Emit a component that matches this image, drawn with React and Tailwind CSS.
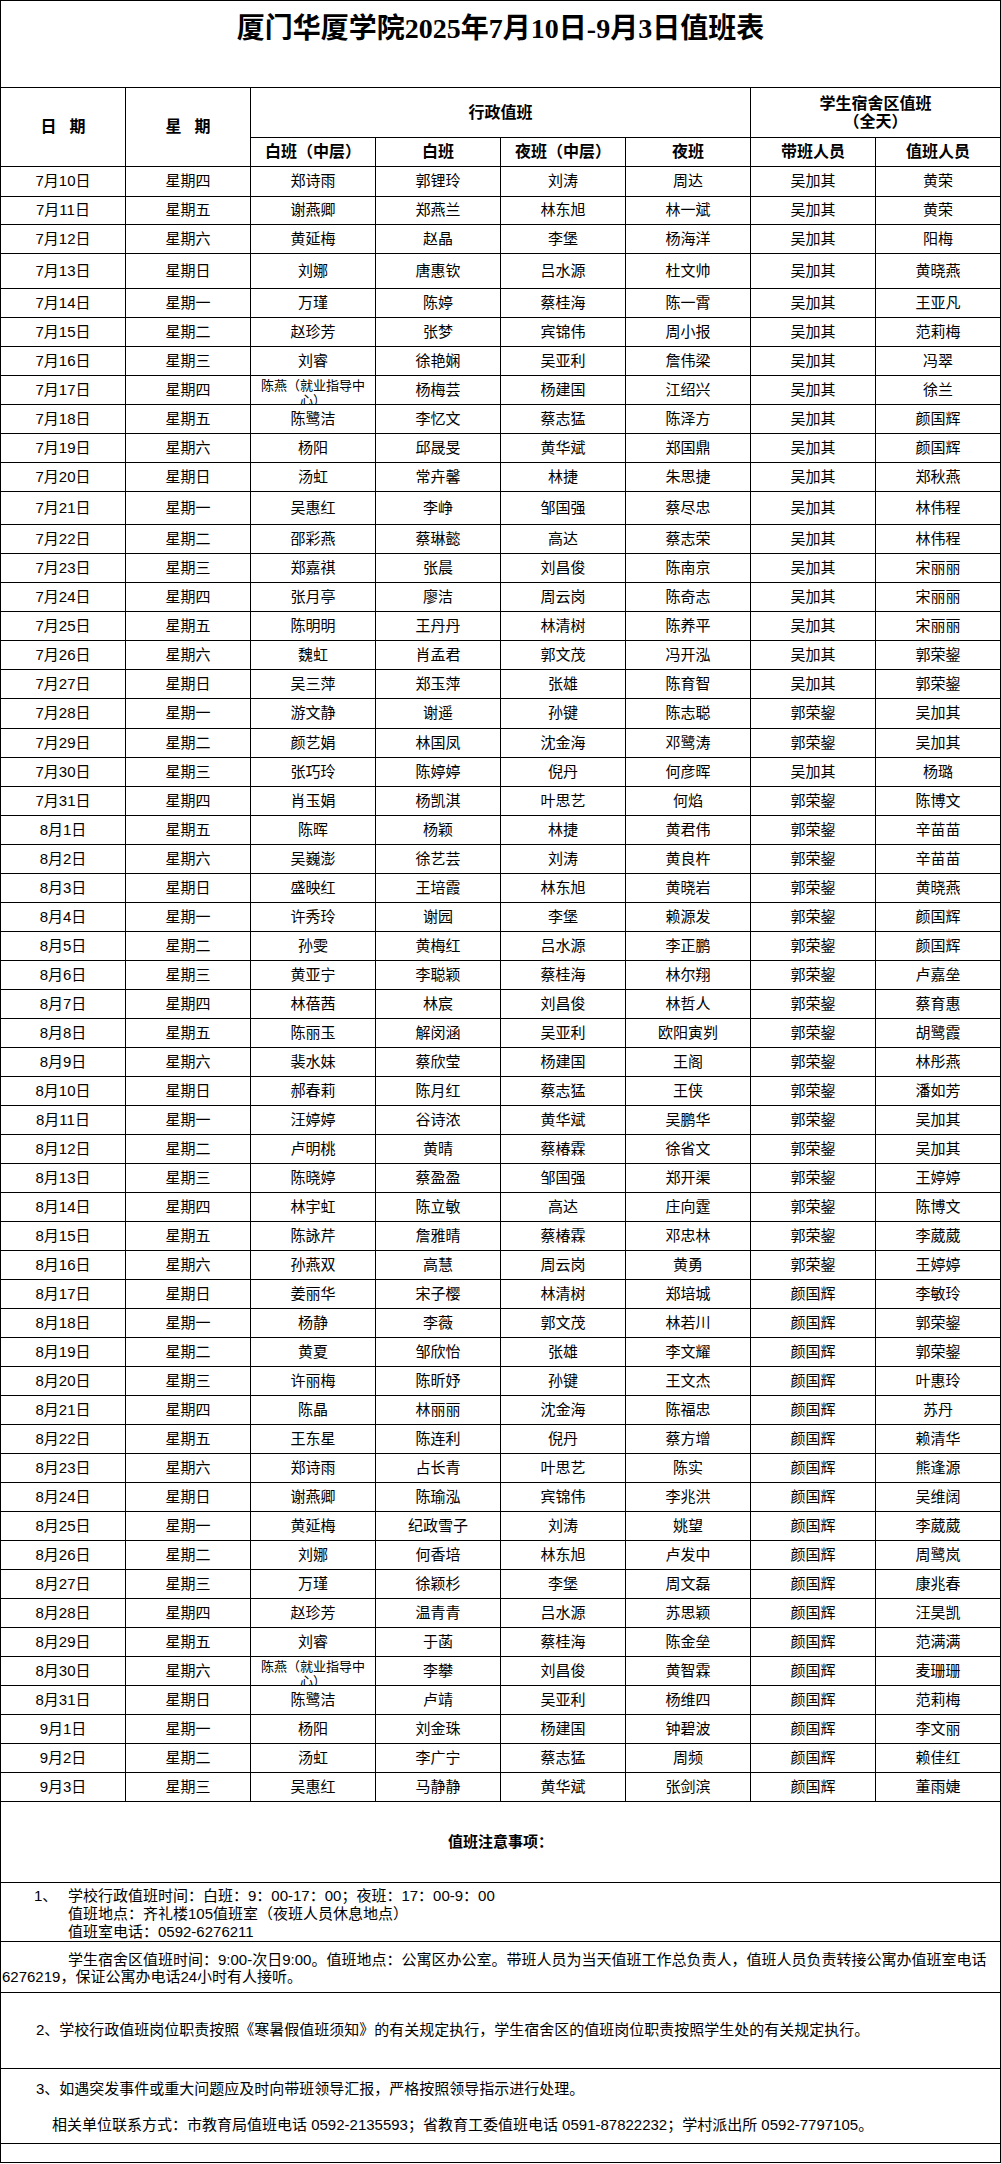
const rows = [
  ["7月10日", "星期四", "郑诗雨", "郭锂玲", "刘涛", "周达", "吴加其", "黄荣", 30],
  ["7月11日", "星期五", "谢燕卿", "郑燕兰", "林东旭", "林一斌", "吴加其", "黄荣", 28],
  ["7月12日", "星期六", "黄延梅", "赵晶", "李堡", "杨海洋", "吴加其", "阳梅"],
  ["7月13日", "星期日", "刘娜", "唐惠钦", "吕水源", "杜文帅", "吴加其", "黄晓燕", 35],
  ["7月14日", "星期一", "万瑾", "陈婷", "蔡桂海", "陈一霄", "吴加其", "王亚凡"],
  ["7月15日", "星期二", "赵珍芳", "张梦", "宾锦伟", "周小报", "吴加其", "范莉梅"],
  ["7月16日", "星期三", "刘睿", "徐艳娴", "吴亚利", "詹伟梁", "吴加其", "冯翠"],
  ["7月17日", "星期四", "陈燕（就业指导中心）", "杨梅芸", "杨建国", "江绍兴", "吴加其", "徐兰"],
  ["7月18日", "星期五", "陈鹭洁", "李忆文", "蔡志猛", "陈泽方", "吴加其", "颜国辉"],
  ["7月19日", "星期六", "杨阳", "邱晟旻", "黄华斌", "郑国鼎", "吴加其", "颜国辉"],
  ["7月20日", "星期日", "汤虹", "常卉馨", "林捷", "朱思捷", "吴加其", "郑秋燕"],
  ["7月21日", "星期一", "吴惠红", "李峥", "邹国强", "蔡尽忠", "吴加其", "林伟程", 33],
  ["7月22日", "星期二", "邵彩燕", "蔡琳懿", "高达", "蔡志荣", "吴加其", "林伟程"],
  ["7月23日", "星期三", "郑嘉祺", "张晨", "刘昌俊", "陈南京", "吴加其", "宋丽丽"],
  ["7月24日", "星期四", "张月亭", "廖洁", "周云岗", "陈奇志", "吴加其", "宋丽丽"],
  ["7月25日", "星期五", "陈明明", "王丹丹", "林清树", "陈养平", "吴加其", "宋丽丽"],
  ["7月26日", "星期六", "魏虹", "肖孟君", "郭文茂", "冯开泓", "吴加其", "郭荣鋆"],
  ["7月27日", "星期日", "吴三萍", "郑玉萍", "张雄", "陈育智", "吴加其", "郭荣鋆"],
  ["7月28日", "星期一", "游文静", "谢遥", "孙键", "陈志聪", "郭荣鋆", "吴加其", 30],
  ["7月29日", "星期二", "颜艺娟", "林国凤", "沈金海", "邓鹭涛", "郭荣鋆", "吴加其"],
  ["7月30日", "星期三", "张巧玲", "陈婷婷", "倪丹", "何彦晖", "吴加其", "杨璐"],
  ["7月31日", "星期四", "肖玉娟", "杨凯淇", "叶思艺", "何焰", "郭荣鋆", "陈博文"],
  ["8月1日", "星期五", "陈晖", "杨颖", "林捷", "黄君伟", "郭荣鋆", "辛苗苗"],
  ["8月2日", "星期六", "吴巍澎", "徐艺芸", "刘涛", "黄良杵", "郭荣鋆", "辛苗苗"],
  ["8月3日", "星期日", "盛映红", "王培霞", "林东旭", "黄晓岩", "郭荣鋆", "黄晓燕"],
  ["8月4日", "星期一", "许秀玲", "谢园", "李堡", "赖源发", "郭荣鋆", "颜国辉"],
  ["8月5日", "星期二", "孙雯", "黄梅红", "吕水源", "李正鹏", "郭荣鋆", "颜国辉"],
  ["8月6日", "星期三", "黄亚宁", "李聪颖", "蔡桂海", "林尔翔", "郭荣鋆", "卢嘉垒"],
  ["8月7日", "星期四", "林蓓茜", "林宸", "刘昌俊", "林哲人", "郭荣鋆", "蔡育惠"],
  ["8月8日", "星期五", "陈丽玉", "解闵涵", "吴亚利", "欧阳寅刿", "郭荣鋆", "胡鹭霞"],
  ["8月9日", "星期六", "裴水妹", "蔡欣莹", "杨建国", "王阁", "郭荣鋆", "林彤燕"],
  ["8月10日", "星期日", "郝春莉", "陈月红", "蔡志猛", "王侠", "郭荣鋆", "潘如芳"],
  ["8月11日", "星期一", "汪婷婷", "谷诗浓", "黄华斌", "吴鹏华", "郭荣鋆", "吴加其"],
  ["8月12日", "星期二", "卢明桃", "黄晴", "蔡椿霖", "徐省文", "郭荣鋆", "吴加其"],
  ["8月13日", "星期三", "陈晓婷", "蔡盈盈", "邹国强", "郑开渠", "郭荣鋆", "王婷婷"],
  ["8月14日", "星期四", "林宇虹", "陈立敏", "高达", "庄向霆", "郭荣鋆", "陈博文"],
  ["8月15日", "星期五", "陈詠芹", "詹雅晴", "蔡椿霖", "邓忠林", "郭荣鋆", "李葳葳"],
  ["8月16日", "星期六", "孙燕双", "高慧", "周云岗", "黄勇", "郭荣鋆", "王婷婷"],
  ["8月17日", "星期日", "姜丽华", "宋子樱", "林清树", "郑培城", "颜国辉", "李敏玲"],
  ["8月18日", "星期一", "杨静", "李薇", "郭文茂", "林若川", "颜国辉", "郭荣鋆"],
  ["8月19日", "星期二", "黄夏", "邹欣怡", "张雄", "李文耀", "颜国辉", "郭荣鋆"],
  ["8月20日", "星期三", "许丽梅", "陈昕妤", "孙键", "王文杰", "颜国辉", "叶惠玲"],
  ["8月21日", "星期四", "陈晶", "林丽丽", "沈金海", "陈福忠", "颜国辉", "苏丹"],
  ["8月22日", "星期五", "王东星", "陈连利", "倪丹", "蔡方增", "颜国辉", "赖清华"],
  ["8月23日", "星期六", "郑诗雨", "占长青", "叶思艺", "陈实", "颜国辉", "熊逢源"],
  ["8月24日", "星期日", "谢燕卿", "陈瑜泓", "宾锦伟", "李兆洪", "颜国辉", "吴维阔"],
  ["8月25日", "星期一", "黄延梅", "纪政雪子", "刘涛", "姚望", "颜国辉", "李葳葳"],
  ["8月26日", "星期二", "刘娜", "何香培", "林东旭", "卢发中", "颜国辉", "周鹭岚"],
  ["8月27日", "星期三", "万瑾", "徐颖杉", "李堡", "周文磊", "颜国辉", "康兆春"],
  ["8月28日", "星期四", "赵珍芳", "温青青", "吕水源", "苏思颖", "颜国辉", "汪昊凯"],
  ["8月29日", "星期五", "刘睿", "于菡", "蔡桂海", "陈金垒", "颜国辉", "范满满"],
  ["8月30日", "星期六", "陈燕（就业指导中心）", "李攀", "刘昌俊", "黄智霖", "颜国辉", "麦珊珊"],
  ["8月31日", "星期日", "陈鹭洁", "卢靖", "吴亚利", "杨维四", "颜国辉", "范莉梅"],
  ["9月1日", "星期一", "杨阳", "刘金珠", "杨建国", "钟碧波", "颜国辉", "李文丽"],
  ["9月2日", "星期二", "汤虹", "李广宁", "蔡志猛", "周频", "颜国辉", "赖佳红"],
  ["9月3日", "星期三", "吴惠红", "马静静", "黄华斌", "张剑滨", "颜国辉", "董雨婕"],
]

function Cell({ text }) {
  // the long name wraps and gets clipped, as in the sheet
  if (text.length > 6) {
    return (
      <div className="border-r border-black overflow-hidden px-[8px] pt-[2px] text-center text-[13px] leading-[15px]">
        {text}
      </div>
    )
  }
  return <div className="flex items-center justify-center border-r border-black whitespace-nowrap">{text}</div>
}

function DutyRow({ row }) {
  const cells = row.slice(0, 8)
  const h = row[8] ?? 29
  return (
    <div className="grid grid-cols-[repeat(8,125px)] border-b border-black" style={{ height: h }}>
      {cells.map((c, i) => (
        <Cell key={i} text={c} />
      ))}
    </div>
  )
}

export default function App() {
  return (
    <div className="bg-white text-black font-['Liberation_Sans','Noto_Sans_CJK_SC',sans-serif] text-[15px]">
      <div className="w-[1001px] border-l border-t border-black">
        <div className="h-[87px] border-r border-b border-black flex justify-center pt-[10px]">
          <h1 className="font-['Liberation_Serif','Noto_Sans_CJK_SC',serif] font-bold text-[28px] leading-[36px]">
            厦门华厦学院2025年7月10日-9月3日值班表
          </h1>
        </div>

        <div className="grid grid-cols-[repeat(8,125px)] grid-rows-[50px_29px] font-bold text-[16px]">
          <div className="row-span-2 flex items-center justify-center gap-[13px] border-r border-b border-black">
            <span>日</span>
            <span>期</span>
          </div>
          <div className="row-span-2 flex items-center justify-center gap-[13px] border-r border-b border-black">
            <span>星</span>
            <span>期</span>
          </div>
          <div className="col-span-4 flex items-center justify-center border-r border-b border-black">行政值班</div>
          <div className="col-span-2 flex flex-col items-center justify-center border-r border-b border-black leading-[18px]">
            <span>学生宿舍区值班</span>
            <span>（全天）</span>
          </div>
          {["白班（中层）", "白班", "夜班（中层）", "夜班", "带班人员", "值班人员"].map((t) => (
            <div key={t} className="flex items-center justify-center border-r border-b border-black whitespace-nowrap">
              {t}
            </div>
          ))}
        </div>

        {rows.map((r) => (
          <DutyRow key={r[0]} row={r} />
        ))}

        <div className="h-[81px] flex items-center justify-center border-r border-b border-black font-bold">
          值班注意事项：
        </div>

        <div className="h-[59px] flex border-r border-b border-black pl-[33px] pt-[4px] leading-[18px] whitespace-nowrap">
          <span className="w-[34px] shrink-0">1、</span>
          <div className="flex flex-col">
            <span>学校行政值班时间：白班：9：00-17：00；夜班：17：00-9：00</span>
            <span>值班地点：齐礼楼105值班室（夜班人员休息地点）</span>
            <span>值班室电话：0592-6276211</span>
          </div>
        </div>

        <div className="h-[51px] border-r border-b border-black pl-[1px] pt-[9px] leading-[17px] whitespace-nowrap">
          <p className="indent-[66px]">
            学生宿舍区值班时间：9:00-次日9:00。值班地点：公寓区办公室。带班人员为当天值班工作总负责人，值班人员负责转接公寓办值班室电话
          </p>
          <p>6276219，保证公寓办电话24小时有人接听。</p>
        </div>

        <div className="h-[76px] flex items-center border-r border-b border-black pl-[35px] whitespace-nowrap">
          2、学校行政值班岗位职责按照《寒暑假值班须知》的有关规定执行，学生宿舍区的值班岗位职责按照学生处的有关规定执行。
        </div>

        <div className="h-[75px] flex flex-col border-r border-b border-black pt-[11px] leading-[18px] whitespace-nowrap">
          <p className="pl-[35px]">3、如遇突发事件或重大问题应及时向带班领导汇报，严格按照领导指示进行处理。</p>
          <p className="pl-[51px] mt-[18px]">
            相关单位联系方式：市教育局值班电话 0592-2135593；省教育工委值班电话 0591-87822232；学村派出所 0592-7797105。
          </p>
        </div>

        <div className="h-[19px] border-r border-b border-black" />
      </div>
    </div>
  )
}
